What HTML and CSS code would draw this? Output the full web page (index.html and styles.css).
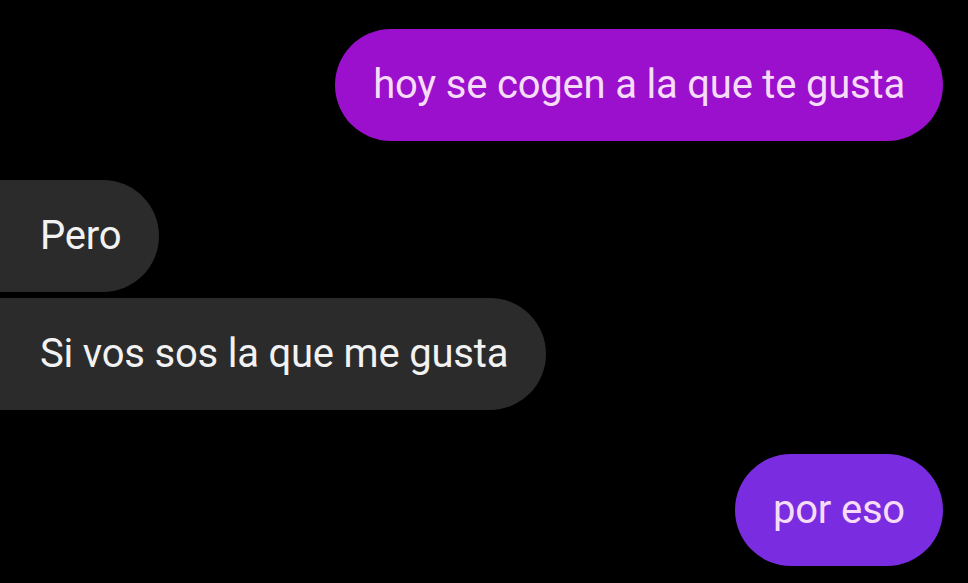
FILE: index.html
```html
<!DOCTYPE html>
<html lang="es">
<head>
<meta charset="utf-8">
<title>Chat</title>
<link rel="stylesheet" href="styles.css">
</head>
<body>
<main class="chat">
  <div class="row out first"><div class="bubble sent magenta">hoy se cogen a la que te gusta</div></div>
  <div class="row in gap-big"><div class="bubble recv">Pero</div></div>
  <div class="row in gap-small"><div class="bubble recv">Si vos sos la que me gusta</div></div>
  <div class="row out gap-big2"><div class="bubble sent violet">por eso</div></div>
</main>
</body>
</html>
```
FILE: styles.css
```css
html, body {
  margin: 0;
  padding: 0;
  background: #000;
  width: 968px;
  height: 583px;
  overflow: hidden;
}
.chat {
  display: flex;
  flex-direction: column;
  padding: 29px 25px 0 0;
  font-family: Roboto, "Noto Sans", sans-serif;
}
.row { display: flex; }
.row.out { justify-content: flex-end; }
.row.in { justify-content: flex-start; }
.gap-big { margin-top: 39px; }
.gap-small { margin-top: 6px; }
.gap-big2 { margin-top: 44px; }
.bubble {
  height: 112px;
  box-sizing: border-box;
  border-radius: 56px;
  display: flex;
  align-items: center;
  font-size: 40px;
  letter-spacing: -0.2px;
  padding: 0 38px 2px;
  white-space: nowrap;
}
.sent { color: #f6dcf8; }
.magenta { background: #9a10cc; }
.violet { background: #7a2de0; }
.recv {
  background: #2b2b2b;
  color: #f2f2f2;
  border-radius: 0 56px 56px 0;
  padding-left: 40px;
}
```
